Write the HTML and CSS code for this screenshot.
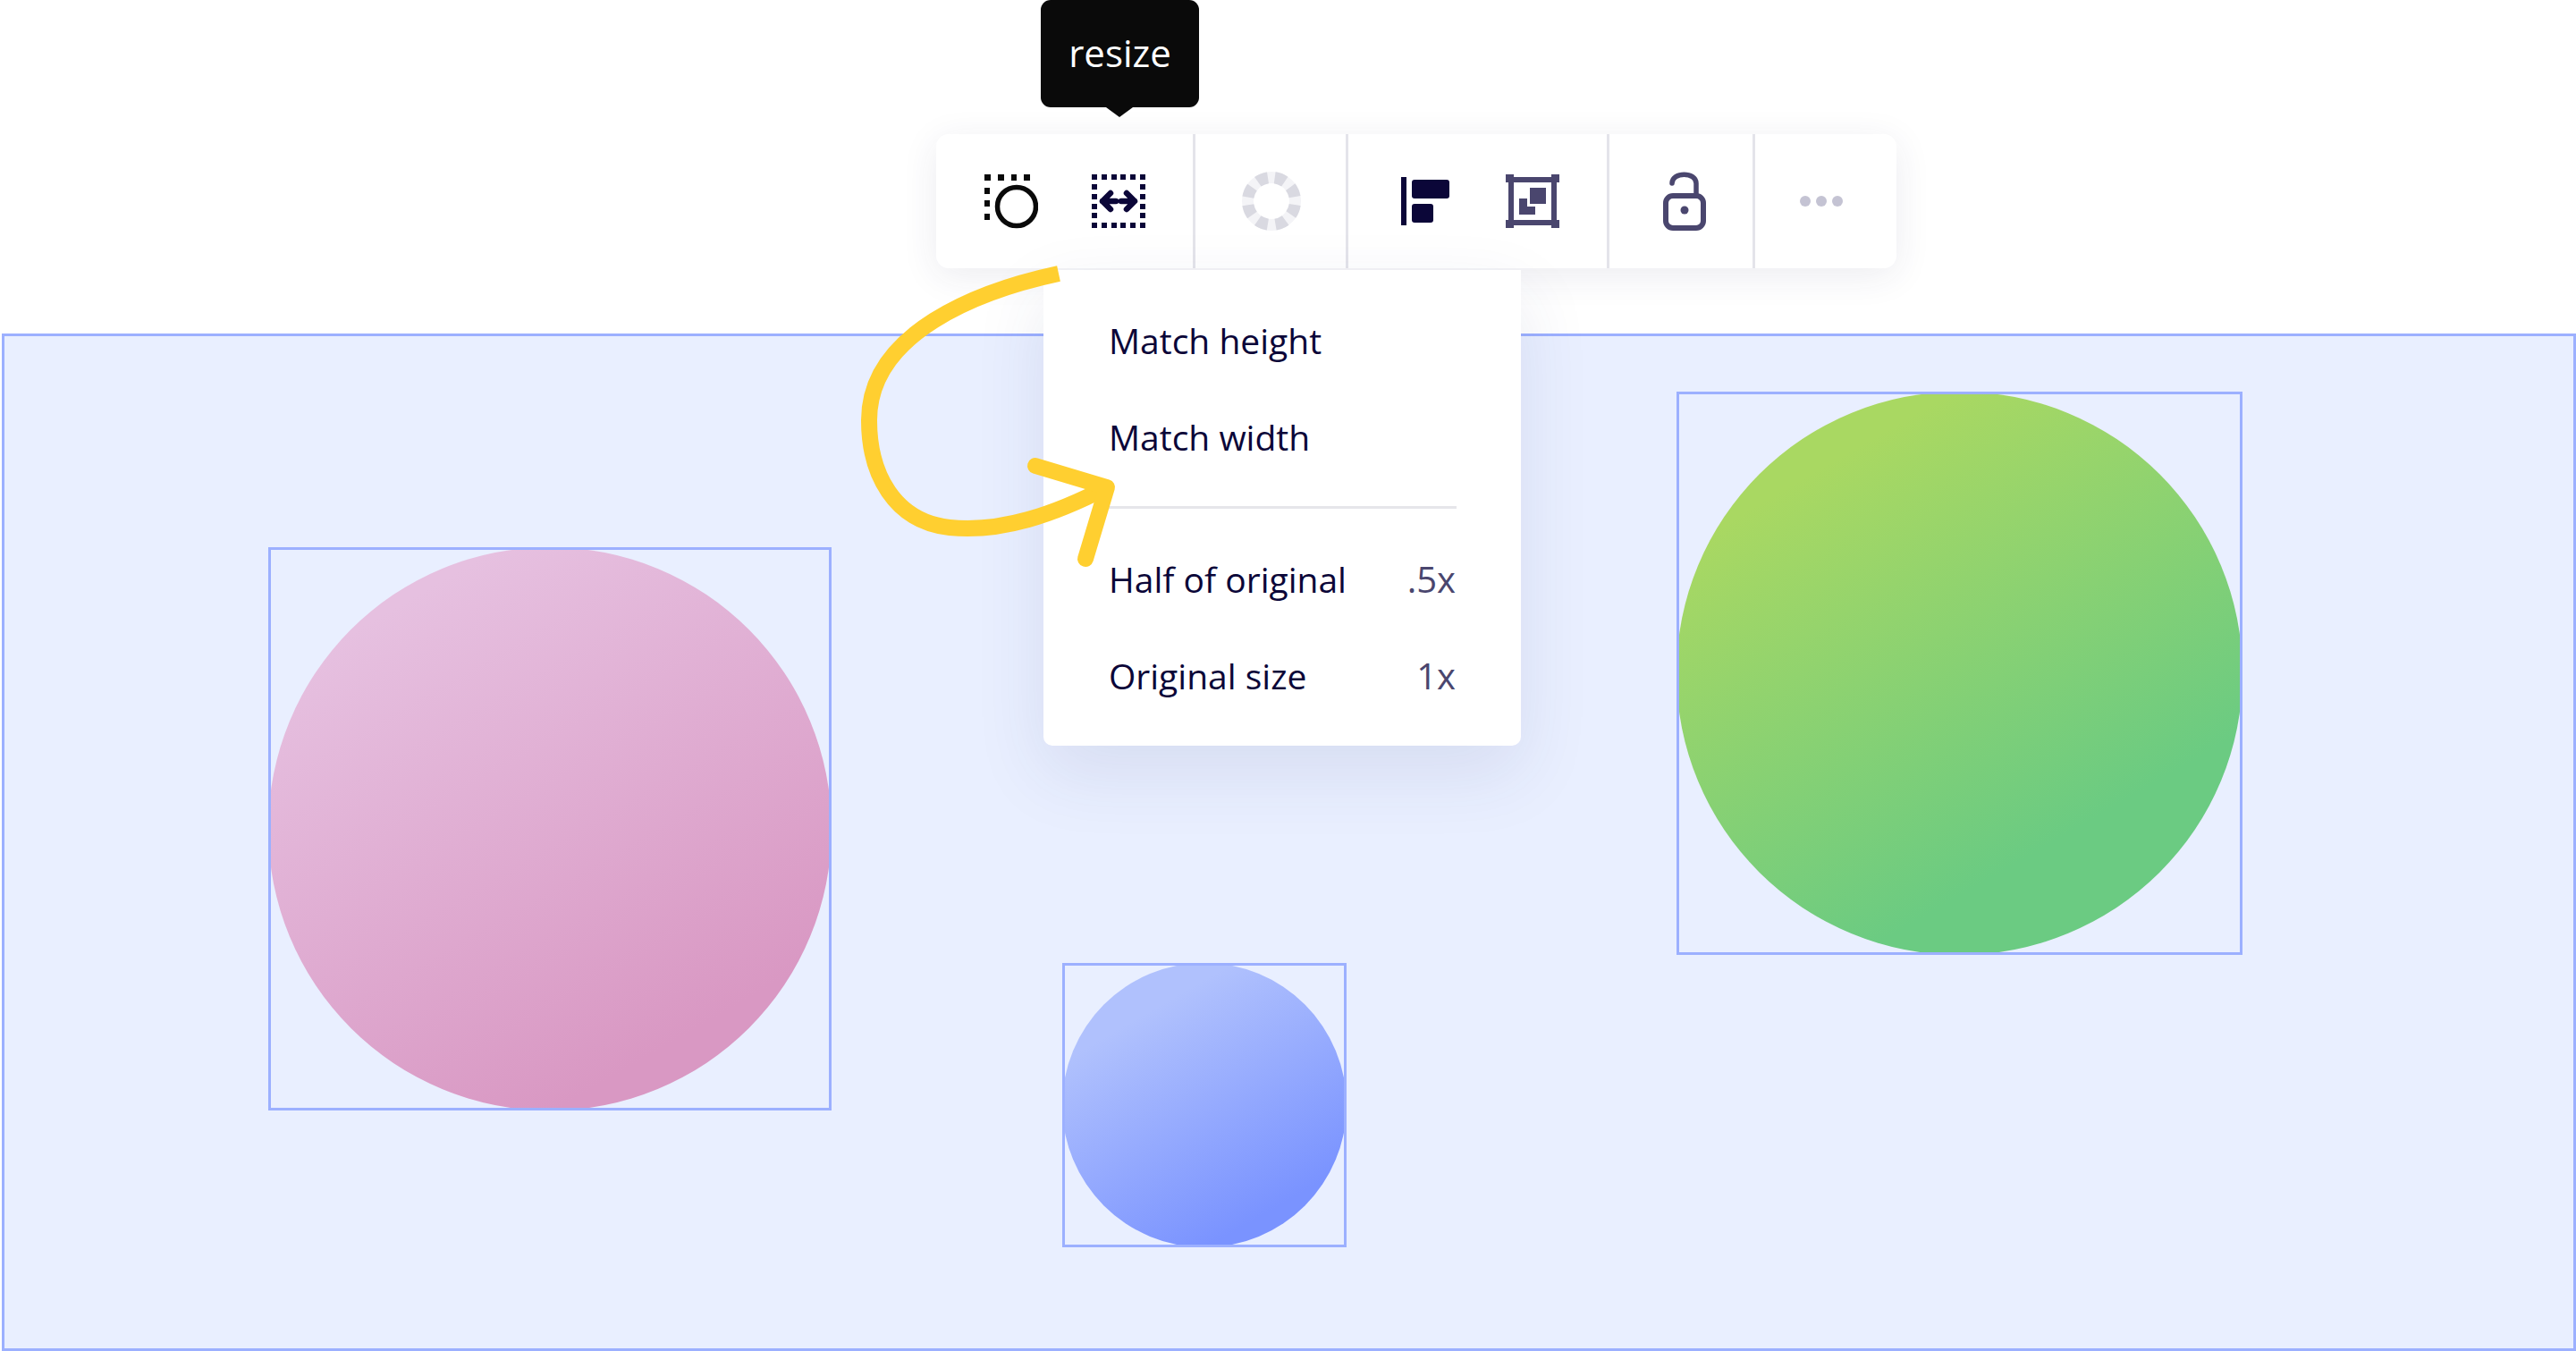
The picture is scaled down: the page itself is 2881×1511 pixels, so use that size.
FILE: index.html
```html
<!DOCTYPE html>
<html lang="en">
<head>
    <meta charset="UTF-8">
    <title>Resize menu</title>
    <link rel="stylesheet" href="styles.css">
</head>
<body>
    <main class="stage">
        <div class="tooltip">resize</div>

        <div class="toolbar">
            <div class="group group_select">
                <svg class="icon" viewBox="0 -3 60 66">
                    <path fill="#0a0a0a" d="M0 0h7v7H0zM15 0h7v7h-7zM30 0h6v7h-6zM44 0h7v7h-7zM0 15h6v7H0zM0 29h6v7H0zM0 44h6v7H0z"/>
                    <circle cx="36" cy="36" r="21.5" fill="none" stroke="#0a0a0a" stroke-width="5.5"/>
                </svg>
                <svg class="icon" viewBox="0 -3 60 66">
                    <path fill="#0b0638" d="M0 0h6v6H0zM11 0h6v6h-6zM22 0h6v6h-6zM32 0h6v6h-6zM43 0h6v6h-6zM54 0h6v6h-6zM0 54h6v6H0zM11 54h6v6h-6zM22 54h6v6h-6zM32 54h6v6h-6zM43 54h6v6h-6zM54 54h6v6h-6zM0 11h6v6H0zM0 22h6v6H0zM0 33h6v6H0zM0 43h6v6H0zM54 11h6v6h-6zM54 22h6v6h-6zM54 33h6v6h-6zM54 43h6v6h-6z"/>
                    <path fill="none" stroke="#0b0638" stroke-width="6.5" stroke-linecap="round" stroke-linejoin="round" d="M21 21l-9 9 9 9M12 30h15M39 21l9 9-9 9M48 30H33"/>
                </svg>
            </div>
            <div class="group group_color">
                <svg class="icon_ring" viewBox="0 0 66 66">
                    <circle cx="33" cy="33" r="26.5" fill="none" stroke="#f4f4f7" stroke-width="13"/>
                    <circle class="ring_dash" cx="33" cy="33" r="26.5"/>
                </svg>
            </div>
            <div class="group group_arrange">
                <svg class="icon" viewBox="0 -3 60 66">
                    <path fill="#0b0638" d="M3 3h6v54H3z"/>
                    <rect x="15" y="6" width="42" height="21" rx="3" fill="#0b0638"/>
                    <rect x="15" y="33" width="24" height="21" rx="3" fill="#0b0638"/>
                </svg>
                <svg class="icon" viewBox="0 -3 60 66">
                    <path fill="#4a466e" d="M0 0h9v3h42V0h9v9h-3v42h3v9h-9v-3H9v3H0v-9h3V9H0zM9 9v42h42V9z"/>
                    <path fill="#4a466e" d="M27 15h18v18H27zM15 27h9v9h9v9H15z"/>
                </svg>
            </div>
            <div class="group group_lock">
                <svg class="icon_lock" viewBox="0 0 48 66">
                    <path fill="none" stroke="#4a466e" stroke-width="5.5" stroke-linecap="round" d="M10 13c0-13 27-13 27 0v13"/>
                    <rect x="3" y="27" width="42" height="36" rx="8" fill="none" stroke="#4a466e" stroke-width="6"/>
                    <circle cx="24" cy="43" r="4.5" fill="#4a466e"/>
                </svg>
            </div>
            <div class="group group_more">
                <span class="dot"></span>
                <span class="dot"></span>
                <span class="dot"></span>
            </div>
        </div>

        <section class="canvas">
            <div class="shape shape_pink"></div>
            <div class="shape shape_green"></div>
            <div class="shape shape_blue"></div>
        </section>

        <div class="menu">
            <div class="menu_item"><span>Match height</span></div>
            <div class="menu_item"><span>Match width</span></div>
            <hr class="menu_rule">
            <div class="menu_item"><span>Half of original</span><span class="hint">.5x</span></div>
            <div class="menu_item"><span>Original size</span><span class="hint">1x</span></div>
        </div>

        <svg class="scribble" viewBox="960 290 300 350">
            <path d="M1184 306C1095 325 972 372 972 470C972 530 1000 583 1062 590C1120 596 1180 575 1238 545"/>
            <path class="scribble_head" d="M1158 521L1238 545L1214 625"/>
        </svg>
    </main>
</body>
</html>
```

FILE: styles.css
```css
html {
    font-family: "Open Sans", sans-serif;
}

body {
    margin: 0;
    background-color: white;
}

.stage {
    position: relative;
    display: flex;
    flex-direction: column;
    width: 2881px;
    height: 1511px;
    overflow: hidden;
}

.tooltip {
    position: relative;
    z-index: 3;
    display: flex;
    align-items: center;
    justify-content: center;
    box-sizing: border-box;
    width: 177px;
    height: 120px;
    margin-left: 1164px;
    padding-bottom: 3px;
    background-color: #0a0a0a;
    border-radius: 11px;
    color: white;
    font-size: 42px;
}

.tooltip::after {
    content: "";
    position: absolute;
    left: 73px;
    top: 120px;
    border-left: 15px solid transparent;
    border-right: 15px solid transparent;
    border-top: 11px solid #0a0a0a;
}

.toolbar {
    position: relative;
    z-index: 1;
    display: flex;
    width: 1074px;
    height: 150px;
    margin: 30px 0 0 1047px;
    background-color: white;
    border-radius: 14px;
    box-shadow: 0 8px 40px rgba(40, 40, 90, 0.09);
}

.group {
    display: flex;
    align-items: center;
    box-sizing: border-box;
    height: 100%;
    border-right: 3px solid #e4e4ea;
}

.group_select {
    width: 290px;
    padding-left: 54px;
    gap: 60px;
}

.group_color {
    width: 171px;
    padding-left: 52px;
}

.group_arrange {
    width: 292px;
    padding-left: 56px;
    gap: 60px;
}

.group_lock {
    width: 163px;
    padding-left: 60px;
}

.group_more {
    width: 158px;
    padding-left: 50px;
    gap: 6px;
    border-right: 0;
}

.icon {
    width: 60px;
    height: 66px;
}

.icon_ring {
    width: 66px;
    height: 66px;
}

.icon_lock {
    width: 48px;
    height: 66px;
}

.ring_dash {
    fill: none;
    stroke: #d9d9e1;
    stroke-width: 13;
    stroke-dasharray: 12 8.81;
    transform: rotate(-82deg);
    transform-origin: 33px 33px;
}

.dot {
    width: 12px;
    height: 12px;
    background-color: #c4c3d3;
    border-radius: 50%;
}

.canvas {
    position: relative;
    box-sizing: border-box;
    width: 2879px;
    height: 1138px;
    margin: 73px 0 0 2px;
    background-color: #e9efff;
    border: 3px solid #9cb0ff;
}

.shape {
    position: absolute;
}

.shape::before,
.shape::after {
    content: "";
    position: absolute;
    inset: 0;
}

.shape::before {
    border-radius: 50%;
}

.shape::after {
    border: 3px solid #9cb0ff;
}

.shape_pink {
    left: 295px;
    top: 236px;
    width: 630px;
    height: 630px;
}

.shape_pink::before {
    background: linear-gradient(150deg, #e6c0e0 15%, #d998c3 82%);
}

.shape_green {
    left: 1870px;
    top: 62px;
    width: 633px;
    height: 630px;
}

.shape_green::before {
    background: linear-gradient(150deg, #a9d862 18%, #6bcb82 75%);
}

.shape_blue {
    left: 1183px;
    top: 701px;
    width: 318px;
    height: 318px;
}

.shape_blue::before {
    background: linear-gradient(150deg, #b0c1fd 22%, #7a93ff 82%);
}

.menu {
    position: absolute;
    z-index: 2;
    left: 1167px;
    top: 302px;
    box-sizing: border-box;
    width: 534px;
    height: 532px;
    padding: 24px 73px 25px;
    background-color: white;
    border-radius: 0 0 10px 10px;
    box-shadow: 0 30px 80px rgba(50, 60, 120, 0.1);
    color: #0b0638;
    font-size: 39px;
}

.menu_item {
    display: flex;
    align-items: center;
    justify-content: space-between;
    height: 108px;
}

.hint {
    color: #4a466e;
    font-size: 40px;
}

.menu_rule {
    height: 3px;
    margin: 24px -1px 24px 0;
    background-color: #e6e6ea;
    border: 0;
}

.scribble {
    position: absolute;
    z-index: 4;
    left: 960px;
    top: 290px;
    width: 300px;
    height: 350px;
}

.scribble path {
    fill: none;
    stroke: #ffcf30;
    stroke-width: 18;
    stroke-linejoin: round;
}

.scribble .scribble_head {
    stroke-linecap: round;
}
```
